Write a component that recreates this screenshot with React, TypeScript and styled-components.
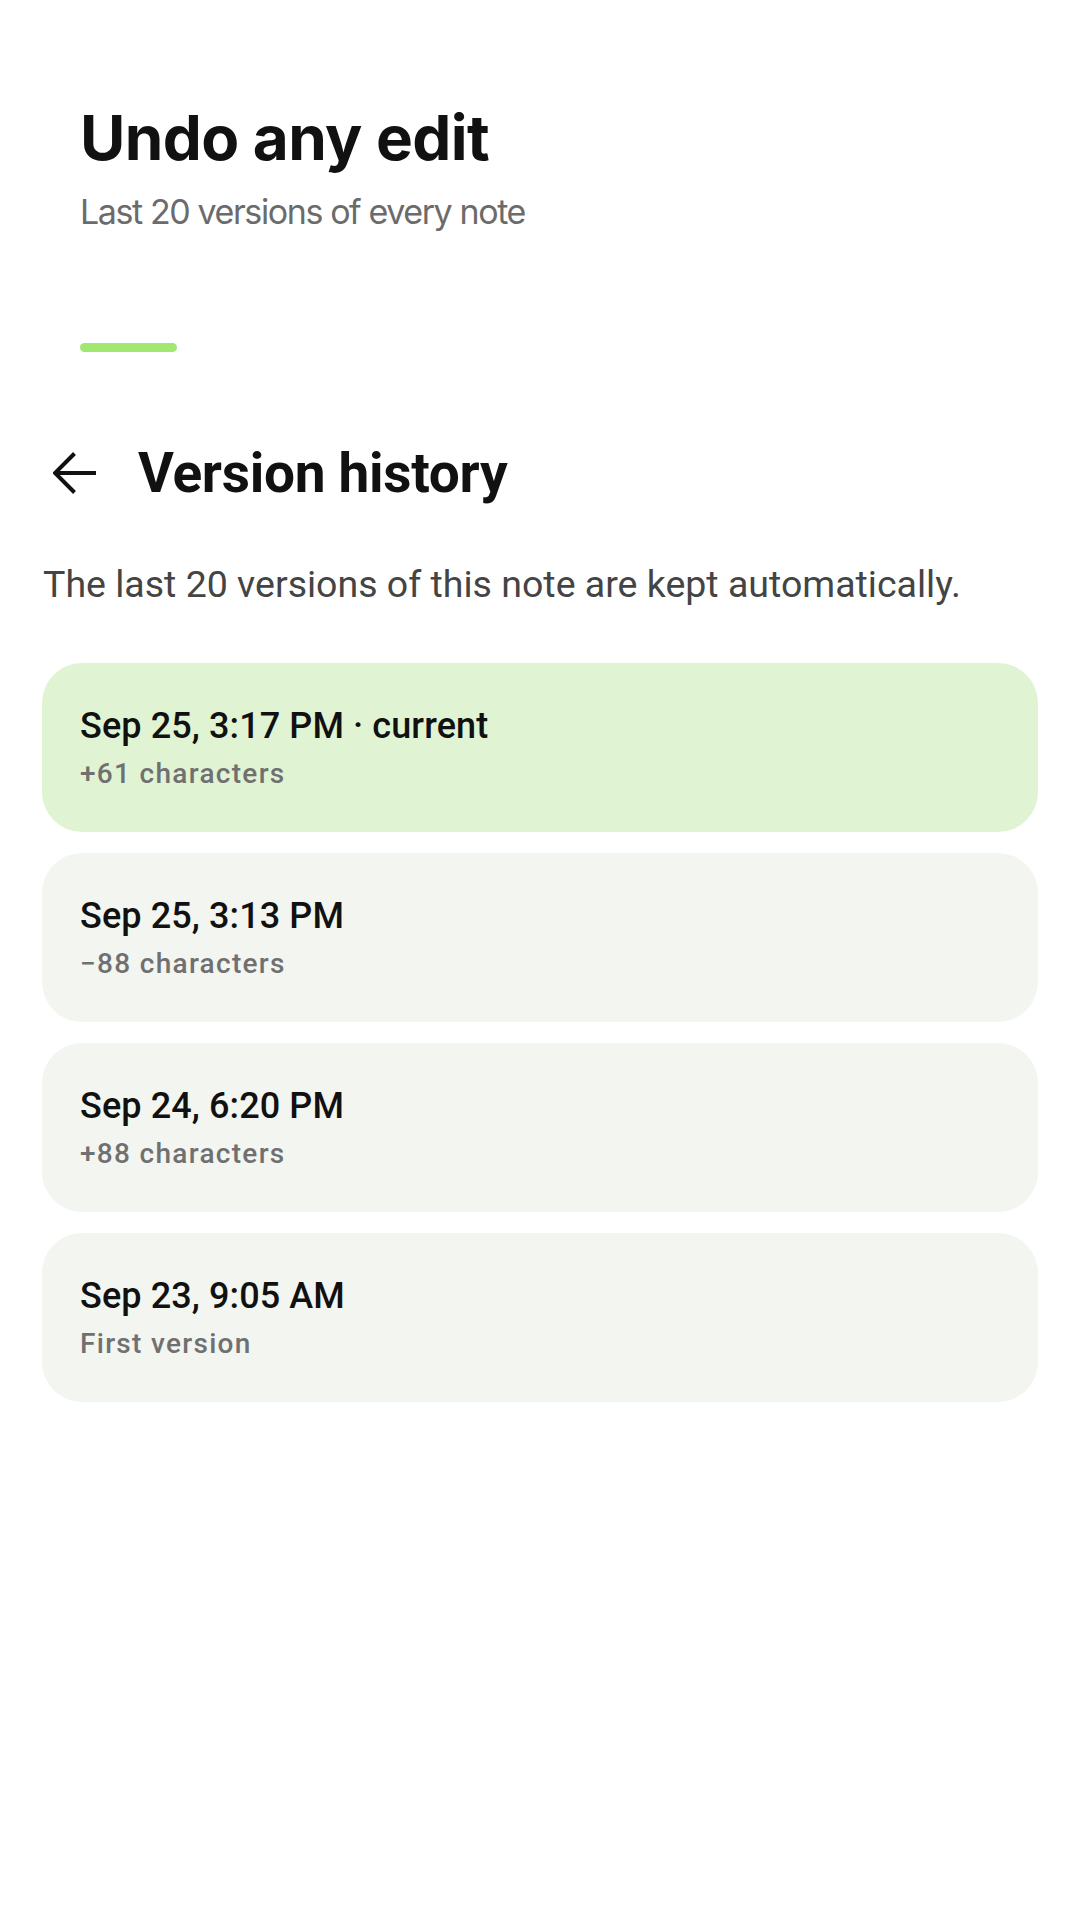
import React from "react";
import styled, { createGlobalStyle } from "styled-components";

const GlobalStyle = createGlobalStyle`
  html, body {
    margin: 0;
    padding: 0;
    background: #ffffff;
  }
  body {
    font-family: Roboto, "Noto Sans", "Liberation Sans", sans-serif;
    -webkit-font-smoothing: antialiased;
  }
  * { box-sizing: border-box; }
`;

const Page = styled.main`
  width: 1080px;
  min-height: 1920px;
  background: #ffffff;
  display: flex;
  flex-direction: column;
`;

const Hero = styled.header`
  padding: 105px 80px 0;
  display: flex;
  flex-direction: column;
`;

const HeroTitle = styled.h1`
  margin: 0;
  font-family: Inter, "Liberation Sans", sans-serif;
  font-weight: 700;
  font-size: 62px;
  line-height: 66px;
  letter-spacing: -0.6px;
  color: #111111;
`;

const HeroSubtitle = styled.p`
  margin: 24px 0 0;
  font-family: Inter, "Liberation Sans", sans-serif;
  font-weight: 400;
  font-size: 34px;
  line-height: 34px;
  letter-spacing: -1.4px;
  color: #6b6b6b;
`;

const AccentBar = styled.div`
  margin: 114px 0 0 80px;
  width: 97px;
  height: 9px;
  border-radius: 5px;
  background: #a0e86f;
`;

const Section = styled.section`
  padding: 0 42px;
  display: flex;
  flex-direction: column;
`;

const TopBar = styled.div`
  margin-top: 88px;
  display: flex;
  align-items: center;
  height: 66px;
`;

const BackButton = styled.button`
  margin: 0 0 0 11px;
  padding: 0;
  border: none;
  background: transparent;
  display: flex;
  align-items: center;
  justify-content: center;
  width: 44px;
  height: 42px;
  color: #111111;
`;

const ScreenTitle = styled.h2`
  margin: 0 0 0 41px;
  font-family: Roboto, "Liberation Sans", sans-serif;
  font-weight: 700;
  font-size: 55px;
  line-height: 66px;
  letter-spacing: -0.3px;
  color: #111111;
`;

const Description = styled.p`
  margin: 55px 0 0 1px;
  font-family: Roboto, "Liberation Sans", sans-serif;
  font-weight: 400;
  font-size: 37.5px;
  line-height: 46px;
  color: #444444;
`;

const VersionList = styled.ul`
  list-style: none;
  margin: 56px 0 0;
  padding: 0;
  display: flex;
  flex-direction: column;
  gap: 21px;
`;

const VersionCard = styled.li<{ $current?: boolean }>`
  display: flex;
  flex-direction: column;
  gap: 9px;
  padding: 41px 38px 41px;
  border-radius: 40px;
  background: ${(p) => (p.$current ? "#e0f4d4" : "#f3f5f0")};
`;

const VersionTime = styled.div`
  font-family: Roboto, "Liberation Sans", sans-serif;
  font-weight: 500;
  font-size: 36px;
  line-height: 44px;
  letter-spacing: 0.1px;
  color: #111111;
`;

const VersionMeta = styled.div`
  font-family: Roboto, "Liberation Sans", sans-serif;
  font-weight: 500;
  font-size: 28px;
  line-height: 34px;
  letter-spacing: 1.3px;
  color: #707070;
`;

const ArrowBack = () => (
  <svg width="44" height="42" viewBox="0 0 44 42" fill="none" aria-hidden="true">
    <path d="M2 21H43" stroke="currentColor" strokeWidth="4" />
    <path d="M21.5 1.5L2 21L21.5 40.5" stroke="currentColor" strokeWidth="4" />
  </svg>
);

const versions = [
  { time: "Sep 25, 3:17 PM · current", meta: "+61 characters", current: true },
  { time: "Sep 25, 3:13 PM", meta: "−88 characters" },
  { time: "Sep 24, 6:20 PM", meta: "+88 characters" },
  { time: "Sep 23, 9:05 AM", meta: "First version" },
];

export default function App() {
  return (
    <>
      <GlobalStyle />
      <Page>
        <Hero>
          <HeroTitle>Undo any edit</HeroTitle>
          <HeroSubtitle>Last 20 versions of every note</HeroSubtitle>
        </Hero>
        <AccentBar />
        <Section>
          <TopBar>
            <BackButton aria-label="Back">
              <ArrowBack />
            </BackButton>
            <ScreenTitle>Version history</ScreenTitle>
          </TopBar>
          <Description>The last 20 versions of this note are kept automatically.</Description>
          <VersionList>
            {versions.map((v) => (
              <VersionCard key={v.time} $current={v.current}>
                <VersionTime>{v.time}</VersionTime>
                <VersionMeta>{v.meta}</VersionMeta>
              </VersionCard>
            ))}
          </VersionList>
        </Section>
      </Page>
    </>
  );
}
